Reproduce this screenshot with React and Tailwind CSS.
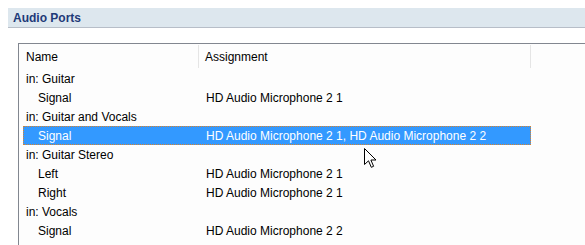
import React from "react";

const rows = [
  { name: "in: Guitar", group: true },
  { name: "Signal", value: "HD Audio Microphone 2 1" },
  { name: "in: Guitar and Vocals", group: true },
  { name: "Signal", value: "HD Audio Microphone 2 1, HD Audio Microphone 2 2", selected: true },
  { name: "in: Guitar Stereo", group: true },
  { name: "Left", value: "HD Audio Microphone 2 1" },
  { name: "Right", value: "HD Audio Microphone 2 1" },
  { name: "in: Vocals", group: true },
  { name: "Signal", value: "HD Audio Microphone 2 2" },
];

const Cursor = () => (
  <svg width="13" height="21" viewBox="0 0 13 21" className="absolute left-[364px] top-[148px]">
    <path
      d="M0.5 0.5 L0.5 16.5 L4.5 12.8 L7.3 19.3 L9.6 18.3 L6.9 12 L12 12 Z"
      fill="#ffffff"
      stroke="#000000"
      strokeWidth="1"
      strokeLinejoin="miter"
    />
  </svg>
);

const App = () => {
  return (
    <div
      className="relative w-[585px] h-[245px] overflow-hidden bg-white pt-[8px] pl-[8px] text-[12px] text-black"
      style={{ fontFamily: '"Liberation Sans", Arial, sans-serif' }}
    >
      <div className="h-[20px] bg-[#dde7ee] border-b border-[#b7bec8] flex items-center pl-[5px] font-bold text-[#1e3a78]">
        Audio Ports
      </div>
      <div className="mt-[15px] ml-[10px] h-[300px] border-t border-l border-[#828790] bg-[#fdfdfd]">
        <div className="flex h-[25px] items-center">
          <div className="w-[180px] h-[23px] flex items-center pl-[7px] border-r border-[#e5e5e5]">Name</div>
          <div className="w-[332px] h-[23px] flex items-center pl-[6px] border-r border-[#e5e5e5]">Assignment</div>
        </div>
        {rows.map((r, i) => (
          <div
            key={i}
            className={
              "ml-[4px] w-[508px] h-[19px] grid grid-cols-[176px_1fr] items-center " +
              (r.selected ? "bg-[#3399ff] text-white border border-dotted border-[#d9822b]" : "")
            }
          >
            <div className={r.group ? "pl-[3px]" : r.selected ? "pl-[14px]" : "pl-[15px]"}>{r.name}</div>
            <div className={r.selected ? "pl-[6px]" : "pl-[7px]"}>{r.value}</div>
          </div>
        ))}
      </div>
      <Cursor />
    </div>
  );
};

export default App;
